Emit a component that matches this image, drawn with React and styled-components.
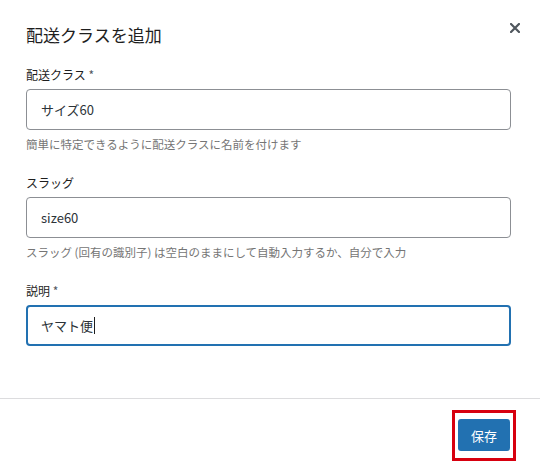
import React from 'react';
import styled, { createGlobalStyle } from 'styled-components';

const GlobalStyle = createGlobalStyle`
    html, body {
        margin: 0;
        padding: 0;
        background: #ffffff;
    }
    body {
        font-family: "Noto Sans CJK JP", "Noto Sans", sans-serif;
        color: #1e1e1e;
    }
`;

const fields = [
    { id: 'name', label: '配送クラス', required: true, value: 'サイズ60', help: '簡単に特定できるように配送クラスに名前を付けます' },
    { id: 'slug', label: 'スラッグ', required: false, value: 'size60', help: 'スラッグ (回有の識別子) は空白のままにして自動入力するか、自分で入力' },
    { id: 'desc', label: '説明', required: true, value: 'ヤマト便', focused: true },
];

const App = () => {
    return (
        <Modal>
            <GlobalStyle />
            <Header>
                <Title>配送クラスを追加</Title>
                <CloseButton aria-label="閉じる">
                    <svg width="10" height="10" viewBox="0 0 10 10">
                        <path d="M1 1 L9 9 M9 1 L1 9" stroke="#50575e" strokeWidth="2.2" strokeLinecap="square" />
                    </svg>
                </CloseButton>
            </Header>
            <Body>
                {fields.map((f) => (
                    <Field key={f.id}>
                        <Label>
                            {f.label}
                            {f.required && <Star> *</Star>}
                        </Label>
                        <InputBox $focused={f.focused}>
                            {f.value}
                            {f.focused && <Caret />}
                        </InputBox>
                        {f.help && <Help>{f.help}</Help>}
                    </Field>
                ))}
            </Body>
            <Footer>
                <Highlight>
                    <SaveButton>保存</SaveButton>
                </Highlight>
            </Footer>
        </Modal>
    );
};

export default App;

const Modal = styled.div`
    width: 540px;
    height: 469px;
    display: flex;
    flex-direction: column;
    background: #fff;
`;

const Header = styled.div`
    display: flex;
    justify-content: space-between;
    align-items: flex-start;
    padding: 22px 20px 0 26px;
`;

const Title = styled.h1`
    margin: 0;
    font-size: 17px;
    line-height: 25px;
    font-weight: 400;
    color: #1e1e1e;
`;

const CloseButton = styled.button`
    border: none;
    background: none;
    padding: 0;
    margin-top: 1px;
    width: 10px;
    height: 10px;
    display: flex;
    cursor: pointer;
`;

const Body = styled.div`
    padding: 20px 29px 0 26px;
    display: flex;
    flex-direction: column;
`;

const Field = styled.div`
    display: flex;
    flex-direction: column;
    margin-bottom: 23px;
`;

const Label = styled.label`
    font-size: 12px;
    line-height: 16px;
    color: #1e1e1e;
    margin-bottom: 6px;
`;

const Star = styled.span`
    color: #50575e;
`;

const InputBox = styled.div`
    box-sizing: border-box;
    height: 41px;
    border: ${(p) => (p.$focused ? '2px solid #2271b1' : '1px solid #8c8f94')};
    border-radius: 4px;
    padding: 0 ${(p) => (p.$focused ? '13px' : '14px')};
    display: flex;
    align-items: center;
    font-size: 13px;
    color: #2c3338;
`;

const Caret = styled.span`
    display: inline-block;
    width: 1px;
    height: 17px;
    background: #1e1e1e;
    margin-left: 1px;
`;

const Help = styled.p`
    margin: 6px 0 0;
    font-size: 11.5px;
    line-height: 16px;
    color: #757575;
`;

const Footer = styled.div`
    margin-top: auto;
    border-top: 1px solid #dcdcde;
    display: flex;
    justify-content: flex-end;
    padding: 11px 24px 8px 0;
`;

const Highlight = styled.div`
    border: 3px solid #d7000f;
    padding: 6px 3px 7px 3px;
    display: flex;
`;

const SaveButton = styled.button`
    width: 52px;
    height: 32px;
    border: none;
    border-radius: 3px;
    background: #2271b1;
    color: #fff;
    font-family: "Noto Sans CJK JP", sans-serif;
    font-size: 13px;
    cursor: pointer;
`;
